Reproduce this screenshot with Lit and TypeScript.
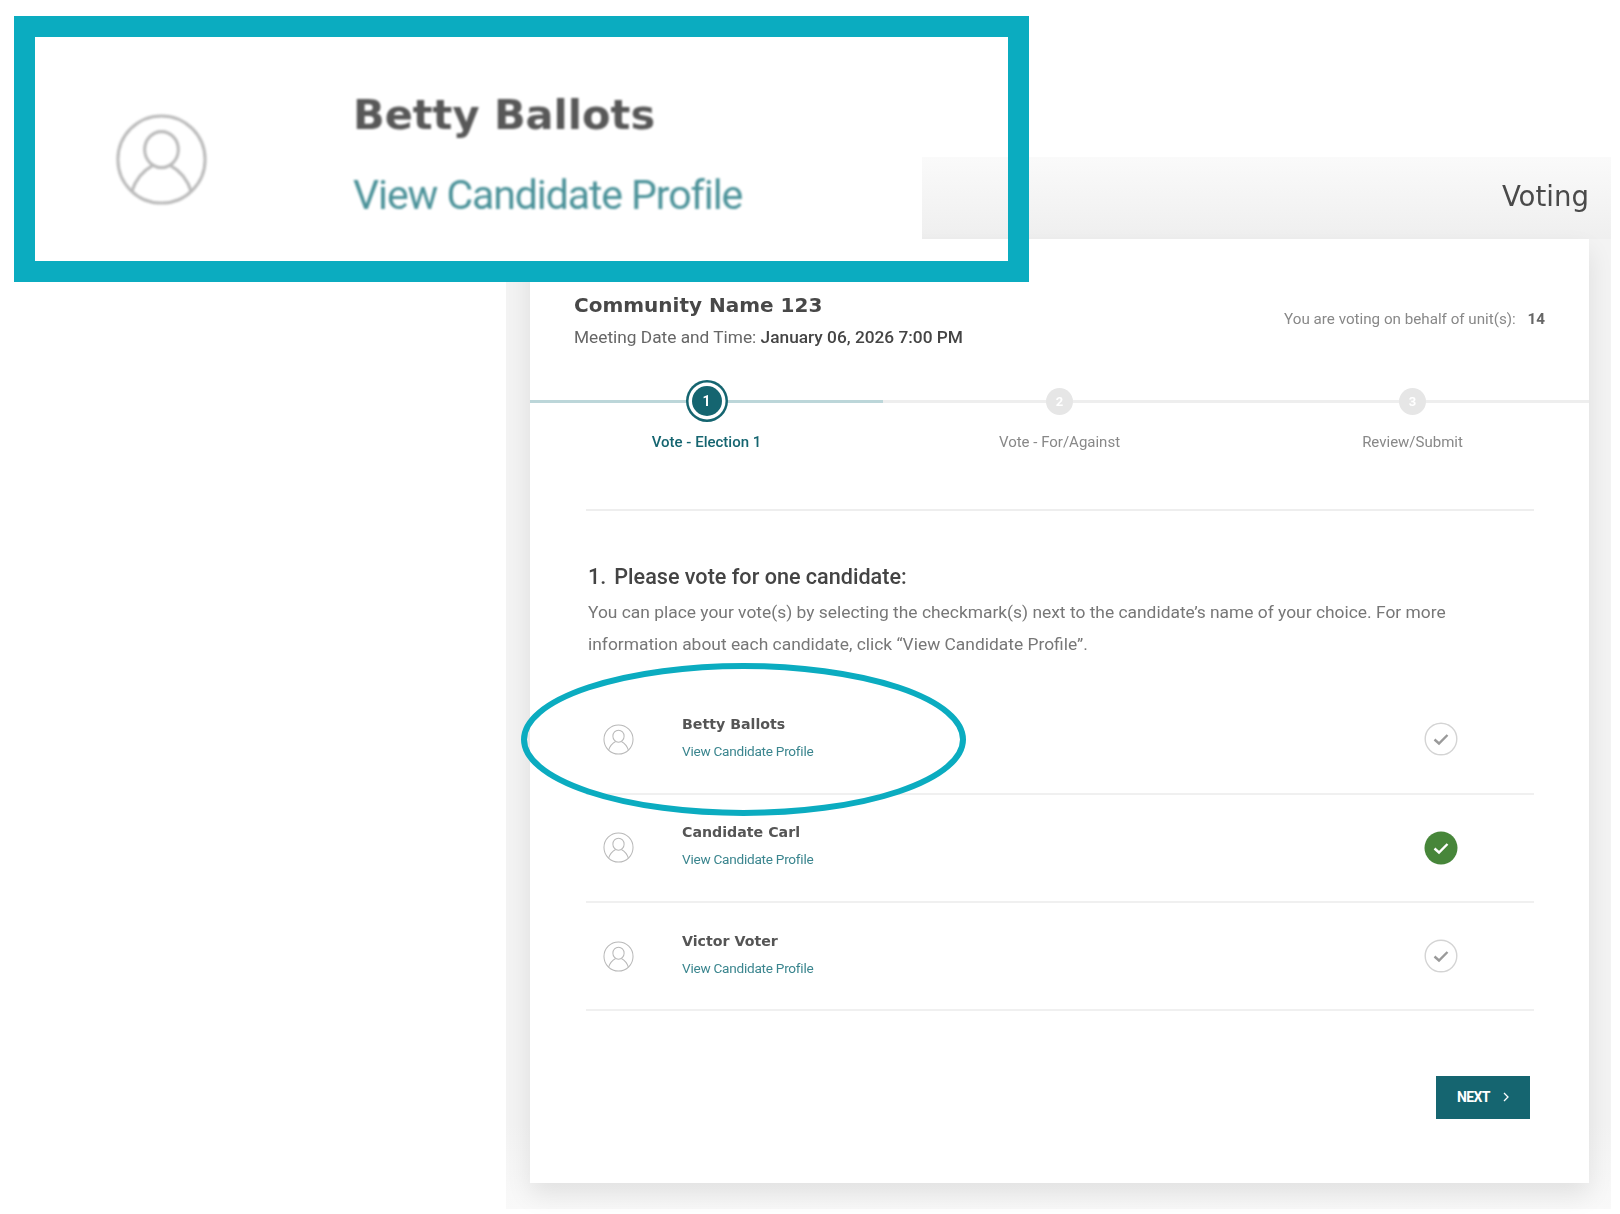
import { LitElement, html, css, svg } from "lit";
import { customElement } from "lit/decorators.js";

const avatar = () => html`<svg class="av" viewBox="0 0 32 32" fill="none" stroke="currentColor" stroke-width="1.05">
  <circle cx="16" cy="16" r="15"></circle>
  <ellipse cx="16" cy="12.6" rx="5.8" ry="6.2"></ellipse>
  <path d="M5.8 27 C7.4 21.6 11.2 19 13 18 M26.2 27 C24.6 21.6 20.8 19 19 18"></path>
</svg>`;

const check = (on: boolean) => html`<svg class="chk" viewBox="0 0 34 34">
  <circle cx="17" cy="17" r="${on ? 16.5 : 15.8}" fill="${on ? "#47863a" : "#fff"}" stroke="${on ? "#47863a" : "#d4d4d4"}" stroke-width="${on ? 0 : 1.4}"></circle>
  ${svg`<path d="M10.5 17.5 L15 21.5 L23.5 13" fill="none" stroke="${on ? "#fff" : "#9a9a9a"}" stroke-width="2.4"></path>`}
</svg>`;

@customElement("app-root")
export class AppRoot extends LitElement {
  static styles = css`
    :host { display: block; position: relative; width: 1620px; height: 1214px; overflow: hidden; background: #fff; font-family: Roboto, "Liberation Sans", sans-serif; color: #444; }
    .panel { box-sizing: border-box; width: 1105px; height: 1052px; margin: 157px 0 0 506px; padding: 0 22px 0 24px; background: linear-gradient(#fafafa, #efefef 82px, #f3f3f3 82px, #f3f3f3 92%, #f9f9f9); }
    .tab { box-sizing: border-box; height: 82px; padding-bottom: 2px; display: flex; justify-content: flex-end; align-items: center; font: 400 27.6px/34px "DejaVu Sans", sans-serif; color: #4a4a4a; filter: blur(.4px); }
    .card { box-sizing: border-box; height: 944px; background: #fff; padding-top: 54px; box-shadow: 0 12px 24px rgba(0,0,0,.09); filter: blur(.55px); }
    .head { display: flex; justify-content: space-between; align-items: center; padding: 0 44px; }
    .title { font: 700 20px/24px "DejaVu Sans", sans-serif; color: #484848; }
    .meet { font-size: 17.3px; line-height: 24px; margin-top: 8px; color: #666; }
    .meet b { font-weight: 500; color: #444; }
    .units { font-size: 15.2px; color: #888; padding-bottom: 5px; }
    .units b { font-weight: 700; color: #666; margin-left: 8px; }
    .steps { display: grid; grid-template-columns: repeat(3, 1fr); margin-top: 31px; }
    .step { display: flex; flex-direction: column; align-items: center; }
    .slot { align-self: stretch; height: 42px; display: flex; align-items: center; justify-content: center; background: linear-gradient(#eee, #eee) center / 100% 3px no-repeat; }
    .step.on .slot { background-image: linear-gradient(#bcd6d9, #bcd6d9); }
    .dot { width: 27px; height: 27px; border-radius: 50%; background: #e6e6e6; color: #fff; font: 700 13px/27px Roboto, sans-serif; text-align: center; }
    .step.on .dot { width: 30px; height: 30px; background: #156570; box-shadow: 0 0 0 3.5px #fff, 0 0 0 6px #156570; line-height: 30px; font-size: 14px; }
    .lbl { margin-top: 10px; font-size: 15px; line-height: 20px; color: #888; }
    .step.on .lbl { color: #156570; font-weight: 500; }
    .body { padding: 0 55px 0 56px; }
    .rule { height: 2px; background: #eee; margin-top: 57px; }
    h2 { margin: 52px 0 0 2px; font: 500 21.6px/28px Roboto, sans-serif; color: #444; }
    h2 span { margin-right: 8px; }
    .desc { margin: 6px 0 0 2px; font-size: 17.4px; line-height: 31.6px; color: #777; }
    .rows { margin-top: 26px; }
    .row { box-sizing: border-box; height: 108.4px; border-bottom: 2px solid #f0f0f0; display: flex; align-items: center; padding: 0 76px 0 17px; }
    .av { display: block; color: #b8b8b8; width: 31px; height: 31px; flex: none; }
    .txt { margin-left: 48px; flex: 1; padding-bottom: 4px; }
    .name { font: 700 14.2px/20px "DejaVu Sans", sans-serif; color: #555; }
    .link { margin-top: 7px; font-size: 13.6px; line-height: 20px; letter-spacing: -.25px; color: #3a858e; }
    .chk { display: block; width: 34px; height: 34px; flex: none; }
    .foot { display: flex; justify-content: flex-end; padding-right: 4px; margin-top: 64.5px; }
    .next { box-sizing: border-box; width: 94px; height: 43px; background: #156570; color: #fff; display: flex; align-items: center; padding-left: 21px; font: 700 14px/1 Roboto, sans-serif; letter-spacing: -.6px; gap: 13px; }
    .next svg { width: 6px; height: 10px; }
    .callout { box-sizing: border-box; position: absolute; left: 14px; top: 16px; width: 1015px; height: 266px; border: 21.5px solid #0bacc0; }
    .zoomed { box-sizing: border-box; width: 887px; height: 100%; background: #fff; display: flex; padding: 53px 0 0 80px; }
    .zoomed .av { width: 93px; height: 93px; color: #bbb; margin-top: 23px; filter: blur(.8px); }
    .ztxt { margin-left: 145px; filter: blur(1.1px); }
    .zname { font: 700 41.5px/50px "DejaVu Sans", sans-serif; color: #585858; }
    .zlink { margin-top: 30px; font-size: 41px; line-height: 50px; letter-spacing: -1.08px; color: #4b9299; }
    .ring { position: absolute; left: 521px; top: 663px; width: 445px; height: 153px; }
  `;

  render() {
    const names = [["Betty Ballots", false], ["Candidate Carl", true], ["Victor Voter", false]] as [string, boolean][];
    return html`
      <div class="panel">
        <div class="tab">Voting</div>
        <div class="card">
          <div class="head">
            <div>
              <div class="title">Community Name 123</div>
              <div class="meet">Meeting Date and Time: <b>January 06, 2026 7:00 PM</b></div>
            </div>
            <div class="units">You are voting on behalf of unit(s): <b>14</b></div>
          </div>
          <div class="steps">
            <div class="step on"><div class="slot"><div class="dot">1</div></div><div class="lbl">Vote - Election 1</div></div>
            <div class="step"><div class="slot"><div class="dot">2</div></div><div class="lbl">Vote - For/Against</div></div>
            <div class="step"><div class="slot"><div class="dot">3</div></div><div class="lbl">Review/Submit</div></div>
          </div>
          <div class="body">
            <div class="rule"></div>
            <h2><span>1.</span>Please vote for one candidate:</h2>
            <p class="desc">You can place your vote(s) by selecting the checkmark(s) next to the candidate’s name of your choice. For more information about each candidate, click “View Candidate Profile”.</p>
            <div class="rows">
              ${names.map(([n, on]) => html`<div class="row">
                ${avatar()}
                <div class="txt"><div class="name">${n}</div><div class="link">View Candidate Profile</div></div>
                ${check(on)}
              </div>`)}
            </div>
            <div class="foot">
              <div class="next">NEXT <svg viewBox="0 0 6 10" fill="none" stroke="#fff" stroke-width="1.3"><path d="M1 1l4 4-4 4"></path></svg></div>
            </div>
          </div>
        </div>
      </div>
      <svg class="ring" viewBox="0 0 445 153" fill="none"><ellipse cx="222.5" cy="76.5" rx="219.5" ry="73.5" stroke="#0bacc0" stroke-width="6"></ellipse></svg>
      <div class="callout">
        <div class="zoomed">
          ${avatar()}
          <div class="ztxt"><div class="zname">Betty Ballots</div><div class="zlink">View Candidate Profile</div></div>
        </div>
      </div>
    `;
  }
}
